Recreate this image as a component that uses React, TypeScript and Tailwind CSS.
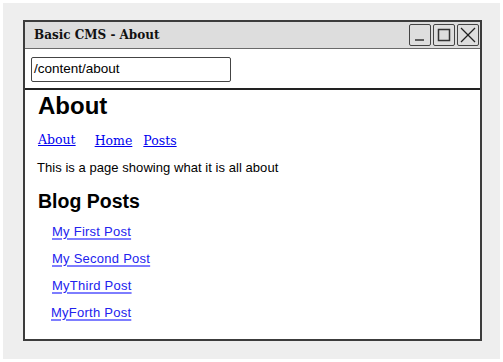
import React from "react";

const sans = { fontFamily: '"Liberation Sans", Arial, sans-serif' };
const serif = { fontFamily: '"DejaVu Serif", serif' };

function WinButton({ children }: { children: React.ReactNode }) {
  return (
    <div className="w-[22px] h-[22px] border-[1.5px] border-[#444] rounded-[2px] bg-[#dedede] flex items-center justify-center">
      {children}
    </div>
  );
}

export default function App() {
  const posts = ["My First Post", "My Second Post", "MyThird Post", "MyForth Post"];
  return (
    <div className="w-[503px] h-[362px] bg-white p-[3px]">
      <div className="w-[497px] h-[356px] bg-[#eeeeee] pt-[17px] pl-[20px] pr-[18px] pb-[18px]">
        <div className="w-full h-full bg-white border-2 border-[#3c3c3c] flex flex-col">
          {/* title bar */}
          <div className="h-[27px] bg-[#dddddd] border-b-[1.5px] border-[#6a6a6a] flex items-center justify-between pl-[9px] pr-[1px]">
            <span className="text-[12px] font-bold text-[#111]" style={serif}>
              Basic CMS - About
            </span>
            <div className="flex gap-[2px]">
              <WinButton>
                <svg width="18" height="18" viewBox="0 0 18 18">
                  <line x1="4" y1="14" x2="13" y2="14" stroke="#333" strokeWidth="1.5" />
                </svg>
              </WinButton>
              <WinButton>
                <svg width="18" height="18" viewBox="0 0 18 18">
                  <rect x="3.5" y="3.5" width="11" height="11" fill="none" stroke="#333" strokeWidth="1.5" />
                </svg>
              </WinButton>
              <WinButton>
                <svg width="18" height="18" viewBox="0 0 18 18">
                  <line x1="2" y1="2" x2="16" y2="16" stroke="#222" strokeWidth="1.3" />
                  <line x1="16" y1="2" x2="2" y2="16" stroke="#222" strokeWidth="1.3" />
                </svg>
              </WinButton>
            </div>
          </div>
          {/* url row */}
          <div className="h-[41px] border-b-2 border-[#222] flex items-center pl-[6px] pt-[1px]">
            <div
              className="w-[200px] h-[25px] border-[1.5px] border-[#444] rounded-[2px] flex items-center pl-[2px] text-[13.5px] text-black"
              style={sans}
            >
              /content/about
            </div>
          </div>
          {/* content */}
          <div className="pl-[13px] pt-[2px] flex flex-col" style={sans}>
            <h1 className="text-[24px] font-bold leading-[28px] text-black">About</h1>
            <div className="flex items-end mt-[12px] leading-[16px] text-[12.5px]" style={serif}>
              <a className="text-[#0000ee] underline mb-[1px]" href="#">About</a>
              <a className="text-[#0000ee] underline ml-[19px]" href="#">Home</a>
              <a className="text-[#0000ee] underline ml-[11px]" href="#">Posts</a>
            </div>
            <p className="mt-[11px] text-[13px] leading-[16px] text-black -ml-[1px] tracking-[0.05px]">
              This is a page showing what it is all about
            </p>
            <h2 className="mt-[13px] text-[19.5px] font-bold leading-[24px] text-black">
              Blog Posts
            </h2>
            <div className="mt-[4px] flex flex-col pl-[14px]">
              {posts.map((p, i) => (
                <div key={p} className="h-[27px] leading-[27px]">
                  <a
                    href="#"
                    className={
                      "text-[13px] text-[#2222ee] underline decoration-[#7d7dff] decoration-2 underline-offset-[2px] tracking-[0.25px] " +
                      (i === 3 ? "-ml-[1px]" : "")
                    }
                  >
                    {p}
                  </a>
                </div>
              ))}
            </div>
          </div>
        </div>
      </div>
    </div>
  );
}
